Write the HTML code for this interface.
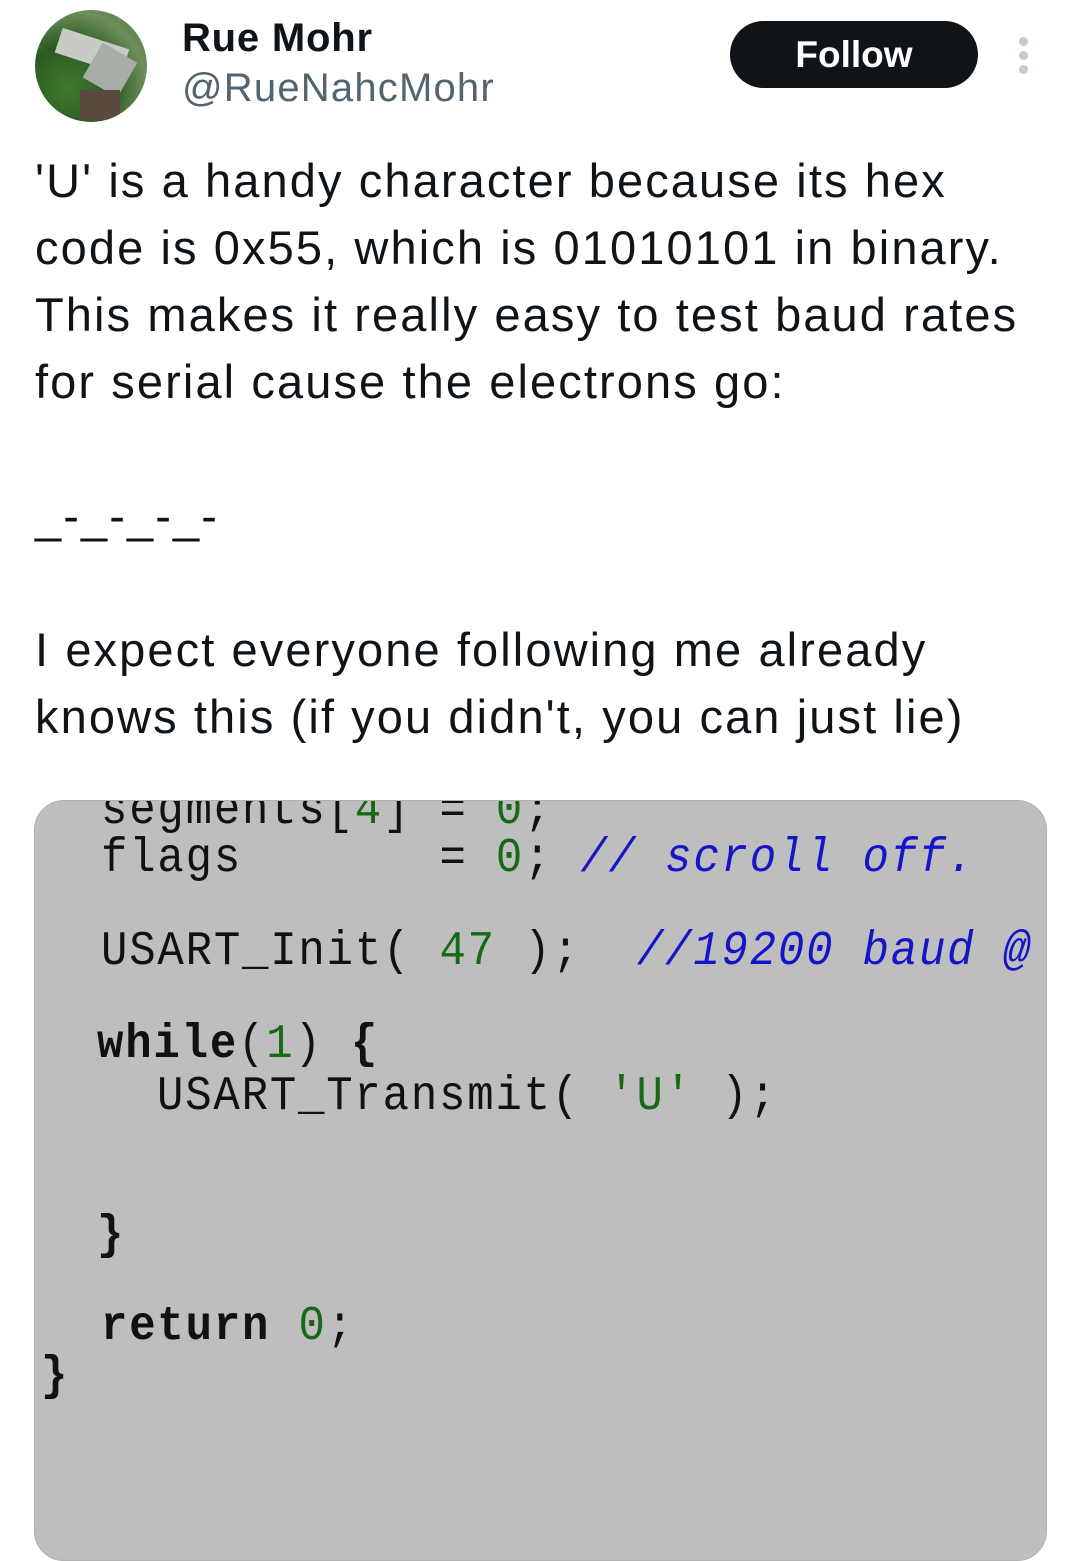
<!DOCTYPE html>
<html><head><meta charset="utf-8"><style>
*{margin:0;padding:0;box-sizing:border-box}
body{width:1080px;height:1561px;background:#fff;position:relative;overflow:hidden;font-family:"Liberation Sans",sans-serif;color:#0f1419}
.av{position:absolute;left:35px;top:10px;width:112px;height:112px;border-radius:50%;overflow:hidden;background:radial-gradient(circle at 30% 70%,#3f7a2c,#2b5a22 40%,#6d8f5a 70%,#4b6b3b)}
.name{position:absolute;left:182px;top:16px;font-size:40px;font-weight:bold;letter-spacing:0.8px}
.handle{position:absolute;left:182px;top:66px;font-size:40px;color:#536471;letter-spacing:1.2px}
.btn{position:absolute;left:730px;top:21px;width:248px;height:67px;border-radius:34px;background:#0f1419;color:#fff;font-size:37px;font-weight:bold;text-align:center;line-height:67px}
.dot{position:absolute;left:1019px;width:9px;height:9px;border-radius:50%;background:#c0ccd4}
.t{position:absolute;left:35px;font-size:47px;line-height:67px;white-space:nowrap;letter-spacing:2.1px}
.img{position:absolute;left:34px;top:800px;width:1013px;height:761px;background:#bebebe;border:1px solid #b0b0b0;border-radius:30px;overflow:hidden}
.c{position:absolute;font-family:"Liberation Mono",monospace;font-size:44px;letter-spacing:1.8px;white-space:pre;color:#111;transform:scaleY(1.1)}
.g{color:#176817}.b{color:#1515c8;font-style:italic}.k{font-weight:bold}
</style></head><body>
<div class="av">
<div style="position:absolute;left:22px;top:28px;width:70px;height:26px;background:#c8cac6;transform:rotate(18deg)"></div>
<div style="position:absolute;left:55px;top:40px;width:40px;height:40px;background:#a9ada7;transform:rotate(30deg)"></div>
<div style="position:absolute;left:45px;top:80px;width:40px;height:30px;background:#5a4a40"></div>
</div>
<div class="name">Rue Mohr</div>
<div class="handle">@RueNahcMohr</div>
<div class="btn">Follow</div>
<div class="dot" style="top:37px"></div><div class="dot" style="top:51px"></div><div class="dot" style="top:65px"></div>
<div class="t" style="top:147px">'U' is a handy character because its hex</div>
<div class="t" style="top:214px">code is 0x55, which is 01010101 in binary.</div>
<div class="t" style="top:281px">This makes it really easy to test baud rates</div>
<div class="t" style="top:348px">for serial cause the electrons go:</div>
<div class="t" style="top:482px">_-_-_-_-</div>
<div class="t" style="top:616px">I expect everyone following me already</div>
<div class="t" style="top:683px">knows this (if you didn't, you can just lie)</div>
<div class="img">
<div class="c" style="left:66px;top:-15px">segments[<span class="g">4</span>] = <span class="g">0</span>;</div>
<div class="c" style="left:66px;top:33px">flags       = <span class="g">0</span>; <span class="b">// scroll off.</span></div>
<div class="c" style="left:66px;top:126px">USART_Init( <span class="g">47</span> );  <span class="b">//19200 baud @</span></div>
<div class="c" style="left:62px;top:219px"><span class="k">while</span>(<span class="g">1</span>) <span class="k">{</span></div>
<div class="c" style="left:122px;top:271px">USART_Transmit( <span class="g">'U'</span> );</div>
<div class="c k" style="left:62px;top:410px">}</div>
<div class="c" style="left:66px;top:501px"><span class="k">return</span> <span class="g">0</span>;</div>
<div class="c k" style="left:6px;top:551px">}</div>
</div>
</body></html>
